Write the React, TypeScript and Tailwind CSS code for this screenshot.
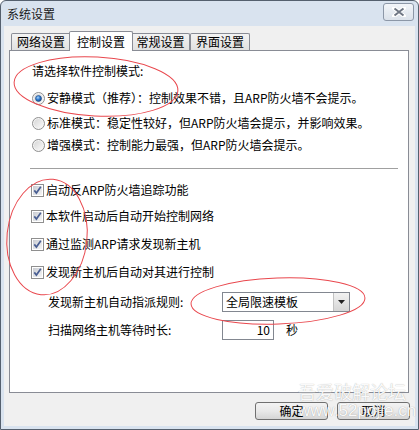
import React from "react";

const font = "font-['Noto_Sans_CJK_SC','Noto_Sans',sans-serif]";

function Radio({ checked }: { checked?: boolean }) {
  return (
    <svg width="13" height="13" viewBox="0 0 13 13" className="shrink-0">
      <defs>
        <linearGradient id="rg" x1="0" y1="0" x2="1" y2="1">
          <stop offset="0" stopColor="#d6d6d6" />
          <stop offset="1" stopColor="#fafafa" />
        </linearGradient>
        <radialGradient id="rb" cx="0.4" cy="0.35" r="0.7">
          <stop offset="0" stopColor="#a9d4f7" />
          <stop offset="0.5" stopColor="#2f7ad0" />
          <stop offset="1" stopColor="#163f7c" />
        </radialGradient>
      </defs>
      <circle cx="6.5" cy="6.5" r="6" fill="#f4f4f4" stroke="#8f8f8f" />
      <circle cx="6.5" cy="6.5" r="4.5" fill="url(#rg)" />
      {checked && <circle cx="6.5" cy="6.5" r="3" fill="url(#rb)" stroke="#1f4a84" strokeWidth="0.6" />}
    </svg>
  );
}

function Check() {
  return (
    <svg width="13" height="13" viewBox="0 0 13 13" className="shrink-0">
      <defs>
        <linearGradient id="cg" x1="0" y1="0" x2="1" y2="1">
          <stop offset="0" stopColor="#c9ccd2" />
          <stop offset="1" stopColor="#f5f5f5" />
        </linearGradient>
      </defs>
      <rect x="0.5" y="0.5" width="12" height="12" fill="#fff" stroke="#8f8f8f" />
      <rect x="2" y="2" width="9" height="9" fill="url(#cg)" />
      <path d="M3.3 6.4 L5.4 9 L9.8 2.8" fill="none" stroke="#4a5f93" strokeWidth="1.7" />
    </svg>
  );
}

function Tab({ label, active, w, extra }: { label: string; active?: boolean; w: string; extra?: string }) {
  return (
    <div
      className={`${w} ${extra ?? ""} flex items-center justify-center border-l border-t border-r border-[#898c95] text-[12px] leading-[16px] text-black ${
        active ? "h-[20px] bg-white relative z-10 rounded-t-[2px]" : "h-[17px] mb-[1px] bg-gradient-to-b from-[#f3f3f3] to-[#e1e1e1] rounded-t-[2px]"
      }`}
    >
      {label}
    </div>
  );
}

function Button({ label }: { label: string }) {
  return (
    <div className="w-[73px] h-[18px] rounded-[3px] border border-[#707070] bg-gradient-to-b from-[#f3f3f3] via-[#e9e9e9] to-[#d5d5d5] flex items-center justify-center text-[12px] leading-[16px] text-black">
      {label}
    </div>
  );
}

export default function App() {
  return (
    <div className={`${font} relative w-[419px] h-[430px] bg-[#d9e3ef] border border-[#55606e] rounded-t-[6px] flex flex-col overflow-hidden`}>
      {/* title bar */}
      <div className="h-[25px] flex items-center justify-between pl-[6px] pr-[4px]">
        <span className="text-[12px] leading-[16px] text-[#1b1b1b]">系统设置</span>
        <div className="w-[31px] h-[18px] -mt-[3px] rounded-[3px] border border-[#8c97a7] bg-gradient-to-b from-[#f2f5f9] to-[#dbe2ea] flex items-center justify-center">
          <svg width="14" height="10" viewBox="0 0 14 10">
            <path d="M2 1 L12 9 M12 1 L2 9" stroke="#fff" strokeWidth="4" strokeLinecap="round" />
            <path d="M2.5 1.5 L11.5 8.5 M11.5 1.5 L2.5 8.5" stroke="#6f7784" strokeWidth="2" />
          </svg>
        </div>
      </div>

      {/* client area */}
      <div className="mx-[3px] mb-[3px] flex-1 bg-[#f0f0f0] pt-[5px] flex flex-col">
        <div className="flex items-end h-[20px] pl-[7px] -mb-[1px] relative z-10">
          <Tab label="网络设置" w="w-[60px]" />
          <Tab label="控制设置" w="w-[64px]" extra="-ml-[2px]" active />
          <Tab label="常规设置" w="w-[59px]" extra="-ml-[2px]" />
          <Tab label="界面设置" w="w-[60px]" />
        </div>

        <div className="ml-[5px] mr-[6px] h-[343px] border border-[#898c95] bg-white flex flex-col text-[12px] leading-[16px] text-black">
          <div className="h-[16px] mt-[12px] pl-[22px]">请选择软件控制模式:</div>

          <div className="h-[16px] mt-[11px] pl-[22px] flex items-center gap-[2px]">
            <Radio checked />
            <span>安静模式（推荐）：控制效果不错，且ARP防火墙不会提示。</span>
          </div>
          <div className="h-[16px] mt-[9px] pl-[22px] flex items-center gap-[2px]">
            <Radio />
            <span>标准模式：稳定性较好，但ARP防火墙会提示，并影响效果。</span>
          </div>
          <div className="h-[16px] mt-[6px] pl-[22px] flex items-center gap-[2px]">
            <Radio />
            <span>增强模式：控制能力最强，但ARP防火墙会提示。</span>
          </div>

          <div className="mt-[15px] ml-[20px] mr-[10px] border-t border-b border-t-[#a0a0a0] border-b-white" />

          <div className="h-[16px] mt-[12px] pl-[21px] flex items-center gap-[2px]">
            <Check />
            <span>启动反ARP防火墙追踪功能</span>
          </div>
          <div className="h-[16px] mt-[10px] pl-[21px] flex items-center gap-[2px]">
            <Check />
            <span>本软件启动后自动开始控制网络</span>
          </div>
          <div className="h-[16px] mt-[12px] pl-[21px] flex items-center gap-[2px]">
            <Check />
            <span>通过监测ARP请求发现新主机</span>
          </div>
          <div className="h-[16px] mt-[12px] pl-[21px] flex items-center gap-[2px]">
            <Check />
            <span>发现新主机后自动对其进行控制</span>
          </div>

          <div className="h-[20px] mt-[12px] pl-[38px] flex items-center">
            <span className="w-[174px]">发现新主机自动指派规则:</span>
            <div className="w-[128px] h-[20px] border border-[#828790] bg-white flex items-center">
              <span className="flex-1 pl-[3px]">全局限速模板</span>
              <div className="w-[16px] h-[18px] bg-gradient-to-b from-[#f2f2f2] to-[#d6d6d6] border-l border-[#c2c2c2] flex items-center justify-center">
                <svg width="7" height="4" viewBox="0 0 7 4">
                  <path d="M0 0 H7 L3.5 4 Z" fill="#222" />
                </svg>
              </div>
            </div>
          </div>
          <div className="h-[20px] mt-[8px] pl-[38px] flex items-center">
            <span className="w-[174px]">扫描网络主机等待时长:</span>
            <div className="w-[52px] h-[20px] border border-[#828790] bg-white flex items-center justify-end pr-[3px]">
              10
            </div>
            <span className="ml-[12px]">秒</span>
          </div>
        </div>

        <div className="mt-[9px] flex justify-end gap-[9px] pr-[5px]">
          <Button label="确定" />
          <Button label="取消" />
        </div>
      </div>

      {/* watermark */}
      <div className="absolute left-[297px] top-[379px] flex flex-col items-start pointer-events-none text-white/95 [text-shadow:0_0_1px_rgba(0,0,0,0.35)] font-['Noto_Sans_CJK_SC',sans-serif]">
        <span className="text-[18px] leading-[22px]">吾爱破解论坛</span>
        <span className="text-[17px] leading-[20px] -mt-[1px] font-['Liberation_Sans',sans-serif]">www.52pojie.cn</span>
      </div>

      {/* red annotation circles */}
      <svg className="absolute left-0 top-0 pointer-events-none" width="419" height="430" viewBox="0 0 419 430">
        <ellipse cx="95" cy="85.5" rx="82" ry="29.5" transform="rotate(3 95 85.5)" fill="none" stroke="#e9474d" strokeWidth="1" />
        <ellipse cx="46" cy="236" rx="40" ry="58" transform="rotate(6 46 236)" fill="none" stroke="#e9474d" strokeWidth="1" />
        <ellipse cx="277" cy="300" rx="87" ry="23" transform="rotate(-2 277 300)" fill="none" stroke="#e9474d" strokeWidth="1" />
      </svg>
    </div>
  );
}
